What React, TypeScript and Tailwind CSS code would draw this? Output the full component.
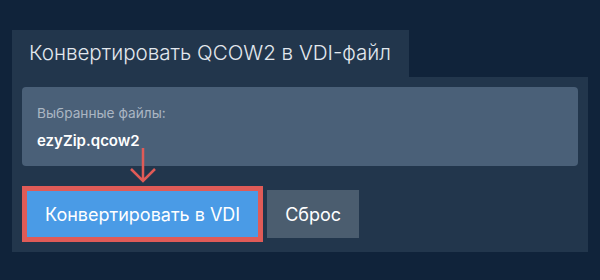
export default function App() {
  return (
    <div className="h-[280px] w-[600px] overflow-hidden bg-[#10233a] px-[12px] pt-[30px] font-['Inter','Noto_Sans',sans-serif]">
      <div className="flex">
        <div className="flex h-[47px] items-center bg-[#22364c] pl-[17px] pr-[18px] text-[20.6px] font-light text-[#e3e8ee]">
          Конвертировать QCOW2 в VDI-файл
        </div>
      </div>
      <div className="relative bg-[#22364c] p-[10px]">
        <div className="flex h-[79px] flex-col rounded-[4px] bg-[#4a6078] px-[15px] pt-[16px]">
          <div className="text-[13.7px] leading-[20px] text-[#aab6c3]">Выбранные файлы:</div>
          <div className="mt-[8px] text-[15px] font-semibold leading-[20px] text-white">ezyZip.qcow2</div>
        </div>
        <svg
          className="absolute left-[117px] top-[70px]"
          width="28"
          height="36"
          viewBox="0 0 28 36"
          fill="none"
          stroke="#e05b57"
          strokeWidth="2.5"
        >
          <path d="M14 1v33M2 22l12 12 12-12" />
        </svg>
        <div className="mt-[20px] flex items-center gap-[4px]">
          <button
            type="button"
            className="h-[56px] border-[5px] border-[#e05b57] bg-[#4a9be6] px-[18px] text-[18px] text-white"
          >
            Конвертировать в VDI
          </button>
          <button type="button" className="h-[48px] bg-[#4b5d6f] px-[18px] text-[18px] text-white">
            Сброс
          </button>
        </div>
      </div>
    </div>
  );
}
